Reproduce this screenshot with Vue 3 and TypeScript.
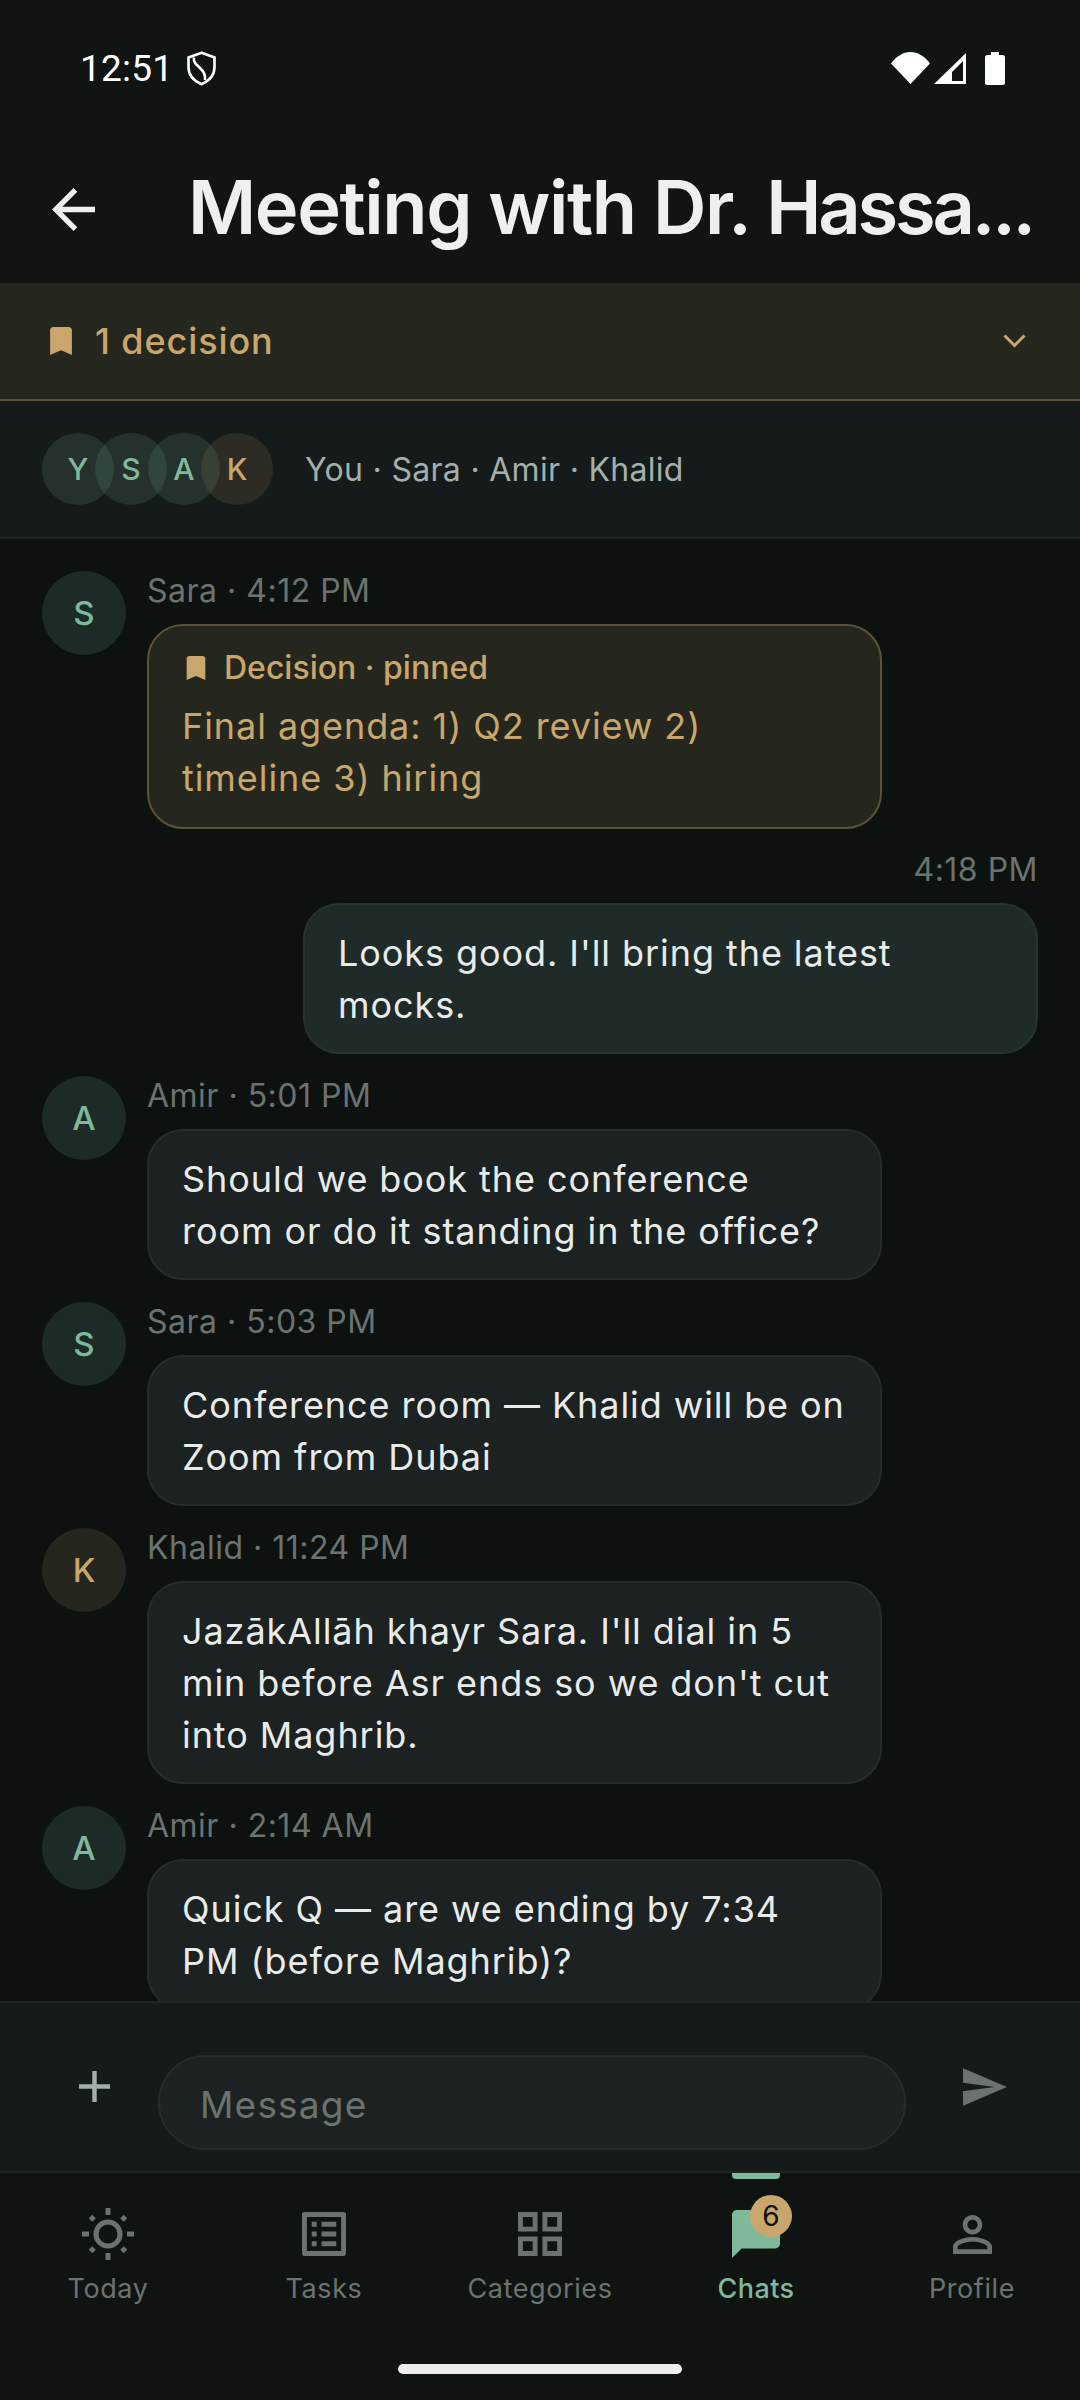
<script setup lang="ts">
interface Msg {
  id: number
  mine?: boolean
  who?: string
  initial?: string
  gold?: boolean
  time: string
  lines: string[]
  pinned?: boolean
}

const people = [
  { letter: 'Y', gold: false },
  { letter: 'S', gold: false },
  { letter: 'A', gold: false },
  { letter: 'K', gold: true },
]

const messages: Msg[] = [
  { id: 1, who: 'Sara', initial: 'S', time: '4:12 PM', pinned: true, lines: ['Final agenda: 1) Q2 review 2)', 'timeline 3) hiring'] },
  { id: 2, mine: true, time: '4:18 PM', lines: ["Looks good. I'll bring the latest", 'mocks.'] },
  { id: 3, who: 'Amir', initial: 'A', time: '5:01 PM', lines: ['Should we book the conference', 'room or do it standing in the office?'] },
  { id: 4, who: 'Sara', initial: 'S', time: '5:03 PM', lines: ['Conference room — Khalid will be on', 'Zoom from Dubai'] },
  { id: 5, who: 'Khalid', initial: 'K', gold: true, time: '11:24 PM', lines: ["JazākAllāh khayr Sara. I'll dial in 5", "min before Asr ends so we don't cut", 'into Maghrib.'] },
  { id: 6, who: 'Amir', initial: 'A', time: '2:14 AM', lines: ['Quick Q — are we ending by 7:34', 'PM (before Maghrib)?'] },
]

const tabs = ['Today', 'Tasks', 'Categories', 'Chats', 'Profile']
const activeTab = 'Chats'
</script>

<template>
  <div class="screen">
    <div class="status">
      <span class="clock">12:51</span>
      <svg class="shield" viewBox="0 0 29 35" fill="none" stroke="#fff" stroke-width="2.6">
        <path d="M14.5 1.8 27.5 6.5V16c0 8-5.400 14-13 17.200C6.900 30 1.500 24 1.500 16V6.500Z" />
        <path d="M7 6.500c-1 5 2.500 7 6 10.500 3.500 3.500 5.500 6 5 12" />
      </svg>
      <span class="spacer"></span>
      <svg class="wifi" viewBox="0 0 39 32"><path d="M0 11.500C5 4.500 12 0 19.500 0S34 4.500 39 11.500L19.500 32Z" fill="#fff" /></svg>
      <svg class="signal" viewBox="0 0 32 31"><path fill-rule="evenodd" d="M32 0V31H0ZM29 8 18 19V28H29Z" fill="#fff" /></svg>
      <svg class="battery" viewBox="0 0 20 33"><path d="M6 0H14V3H18C19 3 20 4 20 5V31C20 32 19 33 18 33H2C1 33 0 32 0 31V5C0 4 1 3 2 3H6Z" fill="#fff" /></svg>
    </div>

    <header class="top">
      <svg class="back" viewBox="4 4 16 16"><path d="M20 11H7.830l5.590-5.590L12 4l-8 8 8 8 1.410-1.410L7.830 13H20v-2z" fill="#eef0ee" /></svg>
      <h1 class="title">Meeting with Dr. <span class="title-end">Hassa...</span></h1>
    </header>

    <div class="decisions">
      <svg class="mark" viewBox="5 3 14 18"><path d="M17 3H7c-1.100 0-2 .9-2 2v16l7-3 7 3V5c0-1.100-.9-2-2-2z" fill="#c9a66b" /></svg>
      <span class="decisions-text">1 decision</span>
      <span class="spacer"></span>
      <svg class="chevron" viewBox="0 0 23 14" fill="none" stroke="#c9a66b" stroke-width="3"><path d="M1.500 1.500 11.500 11.500 21.500 1.500" /></svg>
    </div>

    <div class="people">
      <div class="stack">
        <span v-for="p in people" :key="p.letter" class="stack-dot" :class="{ gold: p.gold }">{{ p.letter }}</span>
      </div>
      <span class="people-names">You · Sara · Amir · Khalid</span>
    </div>

    <main class="thread">
      <template v-for="m in messages" :key="m.id">
        <div v-if="m.mine" class="mine">
          <div class="mine-time">{{ m.time }}</div>
          <div class="bubble bubble-mine">
            <div v-for="l in m.lines" :key="l">{{ l }}</div>
          </div>
        </div>
        <div v-else class="row">
          <span class="avatar" :class="{ gold: m.gold }">{{ m.initial }}</span>
          <div class="col">
            <div class="meta">{{ m.who }} · {{ m.time }}</div>
            <div v-if="m.pinned" class="bubble bubble-pin">
              <div class="pin-head">
                <svg class="pin-mark" viewBox="5 3 14 18"><path d="M17 3H7c-1.100 0-2 .9-2 2v16l7-3 7 3V5c0-1.100-.9-2-2-2z" fill="#c9a66b" /></svg>
                Decision · pinned
              </div>
              <div v-for="l in m.lines" :key="l">{{ l }}</div>
            </div>
            <div v-else class="bubble">
              <div v-for="l in m.lines" :key="l">{{ l }}</div>
            </div>
          </div>
        </div>
      </template>
    </main>

    <div class="composer">
      <svg class="plus" viewBox="5 5 14 14"><path d="M19 13h-6v6h-2v-6H5v-2h6V5h2v6h6v2z" fill="#a4aeaa" /></svg>
      <div class="field">Message</div>
      <svg class="send" viewBox="2 3 21 18"><path d="M2.010 21 23 12 2.010 3 2 10l15 2-15 2z" fill="#6b7370" /></svg>
    </div>

    <nav class="nav">
      <div v-for="t in tabs" :key="t" class="tab" :class="{ on: t === activeTab }">
        <span v-if="t === activeTab" class="tab-bar"></span>
        <div class="tab-icon">
          <svg v-if="t === 'Today'" class="i-sun" viewBox="0 0 54 54" fill="none" stroke="#6b7370" stroke-width="5">
            <circle cx="27" cy="27" r="12" />
            <path d="M27 1V8M27 46V53M1 27H8M46 27H53" />
            <path d="M9.500 9.500 13 13M44.500 9.500 41 13M9.500 44.500 13 41M44.500 44.500 41 41" />
          </svg>
          <svg v-else-if="t === 'Tasks'" class="i-square" viewBox="3 3 18 18">
            <path fill="#6b7370" d="M19 5v14H5V5h14m1.100-2H3.900c-.5 0-.9.4-.9.9v16.200c0 .4.4.9.9.9h16.200c.4 0 .9-.5.9-.9V3.900c0-.5-.5-.9-.9-.9zM11 7h6v2h-6V7zm0 4h6v2h-6v-2zm0 4h6v2h-6zM7 7h2v2H7zm0 4h2v2H7zm0 4h2v2H7z" />
          </svg>
          <svg v-else-if="t === 'Categories'" class="i-square" viewBox="3 3 18 18">
            <path fill="#6b7370" d="M3 3v8h8V3H3zm6 6H5V5h4v4zm-6 4v8h8v-8H3zm6 6H5v-4h4v4zm4-16v8h8V3h-8zm6 6h-4V5h4v4zm-6 4v8h8v-8h-8zm6 6h-4v-4h4v4z" />
          </svg>
          <template v-else-if="t === 'Chats'">
            <svg class="i-chat" viewBox="2 2 20 20">
              <path fill="#7fb89a" d="M20 2H4c-1.100 0-2 .9-2 2v18l4-4h14c1.100 0 2-.9 2-2V4c0-1.100-.9-2-2-2z" />
            </svg>
            <span class="badge">6</span>
          </template>
          <svg v-else class="i-person" viewBox="4 4 16 16">
            <path fill="#6b7370" d="M12 5.900c1.160 0 2.100.94 2.100 2.100s-.94 2.100-2.100 2.100S9.900 9.160 9.900 8s.94-2.100 2.100-2.100m0 9c2.970 0 6.100 1.460 6.100 2.100v1.100H5.900V17c0-.64 3.130-2.100 6.100-2.100M12 4C9.790 4 8 5.790 8 8s1.790 4 4 4 4-1.790 4-4-1.790-4-4-4zm0 9c-2.670 0-8 1.340-8 4v3h16v-3c0-2.660-5.330-4-8-4z" />
          </svg>
        </div>
        <span class="tab-label">{{ t }}</span>
      </div>
      <span class="home-bar"></span>
    </nav>
  </div>
</template>

<style scoped>
.screen {
  width: 1080px;
  height: 2400px;
  display: flex;
  flex-direction: column;
  overflow: hidden;
  background: #0d1211;
  font-family: Inter, "Liberation Sans", sans-serif;
  color: #eef0ee;
}

.spacer {
  flex: 1;
}

/* status bar */
.status {
  height: 136px;
  flex: none;
  display: flex;
  align-items: center;
  padding: 0 75px 0 80px;
  background: #101514;
  box-sizing: border-box;
}

.clock {
  font-family: Roboto, sans-serif;
  font-size: 37px;
  color: #fff;
  letter-spacing: 0.2px;
}

.shield {
  width: 29px;
  height: 35px;
  margin-left: 14px;
}

.wifi {
  width: 39px;
  height: 32px;
}

.signal {
  width: 32px;
  height: 31px;
  margin-left: 4px;
}

.battery {
  width: 20px;
  height: 33px;
  margin-left: 19px;
}

/* title */
.top {
  height: 147px;
  flex: none;
  display: flex;
  align-items: center;
  padding: 0 30px 0 52px;
  background: #101514;
  box-sizing: border-box;
}

.back {
  width: 43px;
  height: 43px;
  flex: none;
}

.title {
  margin: 0 0 5px 93px;
  min-width: 0;
  font-size: 74px;
  line-height: 88px;
  font-weight: 600;
  letter-spacing: -1.4px;
  white-space: nowrap;
  color: #eef0ee;
}

.title-end {
  letter-spacing: -3.2px;
}

/* pinned decisions strip */
.decisions {
  height: 118px;
  flex: none;
  display: flex;
  align-items: center;
  padding: 0 54px 0 50px;
  background: #25261e;
  border-bottom: 2px solid #5c5238;
  box-sizing: border-box;
}

.mark {
  width: 22px;
  height: 28px;
}

.decisions-text {
  margin-left: 23px;
  font-size: 36px;
  font-weight: 500;
  letter-spacing: 0.9px;
  color: #c9a66b;
}

.chevron {
  width: 23px;
  height: 14px;
}

/* participants */
.people {
  height: 138px;
  flex: none;
  display: flex;
  align-items: center;
  padding: 0 42px;
  background: #151b1a;
  border-bottom: 2px solid #1c2423;
  box-sizing: border-box;
}

.stack {
  display: flex;
}

.stack-dot {
  width: 72px;
  height: 72px;
  border-radius: 50%;
  display: flex;
  align-items: center;
  justify-content: center;
  margin-right: -19px;
  background: rgba(127, 184, 154, 0.15);
  color: #7fb89a;
  font-size: 30px;
  font-weight: 500;
}

.stack-dot.gold {
  background: rgba(201, 166, 107, 0.13);
  color: #c9a66b;
}

.people-names {
  margin-left: 51px;
  font-size: 32px;
  letter-spacing: 0.3px;
  color: #a4aeaa;
}

/* thread */
.thread {
  flex: 1;
  min-height: 0;
  overflow: hidden;
  padding: 32px 42px 0;
  display: flex;
  flex-direction: column;
  gap: 22px;
}

.row {
  display: flex;
  gap: 21px;
  flex: none;
}

.avatar {
  width: 84px;
  height: 84px;
  flex: none;
  border-radius: 50%;
  display: flex;
  align-items: center;
  justify-content: center;
  background: #1d2b28;
  color: #7fb89a;
  font-size: 33px;
  font-weight: 500;
}

.avatar.gold {
  background: #25261e;
  color: #c9a66b;
}

.col {
  width: 735px;
}

.meta {
  height: 36px;
  line-height: 40px;
  margin-bottom: 17px;
  font-size: 32px;
  letter-spacing: 0.5px;
  color: #6b7370;
}

.bubble {
  box-sizing: border-box;
  padding: 21.5px 32px 21.5px 33px;
  font-size: 36px;
  line-height: 52px;
  letter-spacing: 0.93px;
  color: #e8ebe9;
  background: #1c2221;
  border: 2px solid #262c2b;
  border-radius: 36px;
}

.bubble-pin {
  padding: 22px 32px 23px 33px;
  background: #25261e;
  border-color: #5c5238;
  color: #c9a66b;
}

.pin-head {
  display: flex;
  align-items: center;
  gap: 18px;
  height: 40px;
  margin-bottom: 12px;
  padding-left: 4px;
  font-size: 32px;
  font-weight: 500;
  letter-spacing: 0;
}

.pin-mark {
  width: 20px;
  height: 24px;
}

.mine {
  flex: none;
  display: flex;
  flex-direction: column;
  align-items: flex-end;
}

.mine-time {
  height: 36px;
  line-height: 38px;
  margin-bottom: 16px;
  font-size: 32px;
  letter-spacing: 0.5px;
  color: #6b7370;
}

.bubble-mine {
  width: 735px;
  background: #1f2b28;
  border-color: #273330;
}

/* input */
.composer {
  height: 172px;
  flex: none;
  display: flex;
  align-items: center;
  padding: 0 73px 0 79px;
  background: #151b1a;
  border-top: 2px solid #1f2625;
  border-bottom: 2px solid #1f2625;
  box-sizing: border-box;
  position: relative;
  z-index: 1;
}

.plus {
  width: 31px;
  height: 31px;
  flex: none;
  margin-bottom: 1px;
}

.field {
  width: 750px;
  height: 95px;
  margin-left: 48px;
  margin-top: 30px;
  box-sizing: border-box;
  display: flex;
  align-items: center;
  padding: 4px 0 0 40px;
  border-radius: 48px;
  background: #1c2221;
  border: 2px solid #262c2b;
  font-size: 37px;
  letter-spacing: 1.2px;
  color: #6b7370;
}

.send {
  width: 44px;
  height: 38px;
  flex: none;
  margin-left: 57px;
}

/* bottom nav */
.nav {
  height: 227px;
  flex: none;
  display: flex;
  align-items: flex-start;
  background: #0f1413;
  position: relative;
}

.tab {
  width: 216px;
  position: relative;
  display: flex;
  flex-direction: column;
  align-items: center;
  padding-top: 28px;
}

.tab-bar {
  position: absolute;
  top: 0;
  left: 84px;
  width: 48px;
  height: 6px;
  border-radius: 0 0 4px 4px;
  background: #7fb89a;
}

.tab-icon {
  width: 66px;
  height: 66px;
  position: relative;
  display: flex;
  align-items: center;
  justify-content: center;
}

.i-sun {
  width: 54px;
  height: 54px;
}

.i-square {
  width: 44px;
  height: 44px;
}

.i-chat {
  width: 48px;
  height: 48px;
}

.i-person {
  width: 39px;
  height: 39px;
}

.badge {
  position: absolute;
  top: -6px;
  left: 27px;
  width: 42px;
  height: 42px;
  border-radius: 50%;
  display: flex;
  align-items: center;
  justify-content: center;
  background: #c9a66b;
  color: #0d1211;
  font-size: 28px;
  font-weight: 400;
}

.tab-label {
  margin-top: 4px;
  font-size: 27px;
  line-height: 36px;
  letter-spacing: 0.6px;
  color: #6b7370;
}

.tab.on .tab-label {
  color: #7fb89a;
  font-weight: 500;
  letter-spacing: 0.4px;
}

.home-bar {
  position: absolute;
  left: 398px;
  top: 191px;
  width: 284px;
  height: 10px;
  border-radius: 5px;
  background: #ececec;
}
</style>

<style>
body {
  background: #0d1211;
}
</style>
